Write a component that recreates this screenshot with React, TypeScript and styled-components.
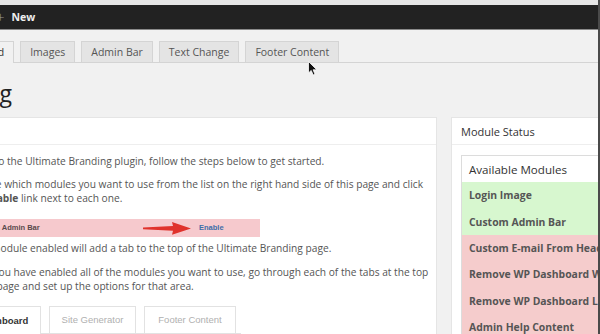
import React from 'react';
import styled, { createGlobalStyle } from 'styled-components';

const GlobalStyle = createGlobalStyle`
  html, body {
    margin: 0;
    padding: 0;
    background: #f1f1f1;
    overflow: hidden;
  }
  body {
    font-family: 'Open Sans', 'Liberation Sans', sans-serif;
    color: #444;
  }
`;

const Screen = styled.div`
  position: relative;
  width: 600px;
  height: 334px;
  overflow: hidden;
  box-sizing: border-box;
  border-right: 2px solid #4a4a4a;
  background: #f1f1f1;
`;

const TopStrip = styled.div`
  height: 5px;
  background: #e6e6e6;
`;

const AdminBar = styled.div`
  height: 24px;
  background: #222;
  border-bottom: 1px solid #8a8a8a;
  display: flex;
  align-items: center;
  gap: 7px;
  color: #fff;
`;

const Plus = styled.span`
  margin-left: -4px;
  font-size: 15px;
  font-weight: 300;
  color: #999;
  line-height: 1;
`;

const NewLabel = styled.span`
  font-size: 10.5px;
  font-weight: 700;
  color: #eee;
`;

const NavTabs = styled.div`
  display: flex;
  gap: 6px;
  margin-top: 11px;
  margin-left: -60px;
  border-bottom: 1px solid #d4d4d4;
  height: 21px;
`;

const NavTab = styled.div<{ $active?: boolean }>`
  box-sizing: border-box;
  height: ${(p) => (p.$active ? '22px' : '21px')};
  padding: 0 9px;
  line-height: 20px;
  font-size: 10.5px;
  color: ${(p) => (p.$active ? '#333' : '#555')};
  background: ${(p) => (p.$active ? '#f1f1f1' : '#e4e4e4')};
  border: 1px solid #d4d4d4;
  border-bottom: none;
  white-space: nowrap;
`;

const Title = styled.h2`
  margin: 15px 0 0 -300px;
  width: 312px;
  text-align: right;
  white-space: nowrap;
  font-family: 'Open Sans', 'Liberation Sans', sans-serif;
  font-weight: 400;
  font-size: 23px;
  line-height: 30px;
  color: #222;
`;

const Columns = styled.div`
  display: flex;
  gap: 14px;
  margin-top: 9px;
  margin-left: -84px;
  align-items: flex-start;
`;

const Panel = styled.div<{ $width: number }>`
  flex: 0 0 ${(p) => p.$width}px;
  width: ${(p) => p.$width}px;
  min-width: 0;
  overflow: hidden;
  box-sizing: border-box;
  background: #fff;
  border: 1px solid #e5e5e5;
  height: 240px;
`;

const PanelHead = styled.div`
  height: 26px;
  border-bottom: 1px solid #eee;
  padding-left: 9px;
  display: flex;
  align-items: center;
  font-size: 11px;
  color: #333;
`;

const PanelBody = styled.div`
  padding: 9px 0 0 31px;
  font-size: 10.2px;
  line-height: 14px;
  color: #555;
`;

const Para = styled.p<{ $gap?: number }>`
  margin: 0 0 ${(p) => p.$gap ?? 10}px;
  white-space: nowrap;
`;

const Steps = styled.div`
  padding-left: 18px;
`;

const ShotBar = styled.div`
  display: grid;
  grid-template-columns: 171px 48px auto;
  align-items: center;
  width: 294px;
  height: 18px;
  margin: 14px 0 4px;
  padding-left: 6px;
  box-sizing: border-box;
  background: #f6c9cd;
  font-family: 'Liberation Sans', Arial, sans-serif;
  font-size: 7.5px;
  font-weight: 700;
`;

const ShotLabel = styled.span`
  color: #5a4a4c;
  white-space: nowrap;
`;

const ShotArrow = styled.svg`
  display: block;
`;

const ShotLink = styled.span`
  color: #3d6ea8;
  padding-left: 8px;
`;

const ShotTabs = styled.div`
  display: flex;
  align-items: flex-end;
  gap: 8px;
  width: 275px;
  height: 27px;
  margin-top: 13px;
  border-bottom: 1px solid #e2e2e2;
  font-family: 'Liberation Sans', Arial, sans-serif;
  font-size: 9.5px;
`;

const ShotTab = styled.div<{ $active?: boolean; $w: number }>`
  box-sizing: border-box;
  width: ${(p) => p.$w}px;
  height: ${(p) => (p.$active ? '28px' : '27px')};
  margin-bottom: ${(p) => (p.$active ? '-1px' : '0')};
  border: 1px solid #e2e2e2;
  border-bottom: none;
  background: #fff;
  display: flex;
  align-items: center;
  justify-content: center;
  color: ${(p) => (p.$active ? '#333' : '#b0b0b0')};
  font-weight: ${(p) => (p.$active ? 700 : 400)};
`;

const SideBody = styled.div`
  padding: 10px 9px;
`;

const ModuleList = styled.div`
  border: 1px solid #dcdcdc;
  background: #fff;
`;

const ModuleHead = styled.div`
  height: 26px;
  display: flex;
  align-items: center;
  padding-left: 7px;
  font-size: 11.6px;
  color: #333;
`;

const ModuleRow = styled.div<{ $on: boolean }>`
  height: 26.4px;
  display: flex;
  align-items: center;
  padding-left: 7px;
  font-size: 10.4px;
  font-weight: 700;
  color: #555;
  white-space: nowrap;
  background: ${(p) => (p.$on ? '#d7f7cf' : '#f5cccc')};
`;

const Cursor = styled.svg`
  position: absolute;
  left: 308px;
  top: 61px;
`;

const modules = [
  { name: 'Login Image', on: true },
  { name: 'Custom Admin Bar', on: true },
  { name: 'Custom E-mail From Headers', on: false },
  { name: 'Remove WP Dashboard Widgets', on: false },
  { name: 'Remove WP Dashboard Link', on: false },
  { name: 'Admin Help Content', on: false },
];

export default function App() {
  return (
    <Screen>
      <GlobalStyle />
      <TopStrip />
      <AdminBar>
        <Plus>+</Plus>
        <NewLabel>New</NewLabel>
      </AdminBar>

      <NavTabs>
        <NavTab $active>Dashboard</NavTab>
        <NavTab>Images</NavTab>
        <NavTab>Admin Bar</NavTab>
        <NavTab>Text Change</NavTab>
        <NavTab>Footer Content</NavTab>
      </NavTabs>

      <Title>Ultimate Branding</Title>

      <Columns>
        <Panel $width={521}>
          <PanelHead />
          <PanelBody>
            <Para $gap={9}>Welcome to the Ultimate Branding plugin, follow the steps below to get started.</Para>
            <Steps>
              <Para $gap={0}>
                Choose which modules you want to use from the list on the right hand side of this page and click
                <br />
                the <b>Enable</b> link next to each one.
              </Para>
              <ShotBar>
                <ShotLabel>Custom Admin Bar</ShotLabel>
                <ShotArrow width="48" height="13" viewBox="0 0 48 13">
                  <path d="M0 5.6 L0 7.2 L30 8.8 L29 12.8 L48 6.4 L29 0 L30 4 Z" fill="#e0322c" />
                </ShotArrow>
                <ShotLink>Enable</ShotLink>
              </ShotBar>
              <Para>Each module enabled will add a tab to the top of the Ultimate Branding page.</Para>
              <Para $gap={0}>
                Once you have enabled all of the modules you want to use, go through each of the tabs at the top
                <br />
                of the page and set up the options for that area.
              </Para>
              <ShotTabs>
                <ShotTab $active $w={75}>Dashboard</ShotTab>
                <ShotTab $w={87}>Site Generator</ShotTab>
                <ShotTab $w={92}>Footer Content</ShotTab>
              </ShotTabs>
            </Steps>
          </PanelBody>
        </Panel>

        <Panel $width={260}>
          <PanelHead>Module Status</PanelHead>
          <SideBody>
            <ModuleList>
              <ModuleHead>Available Modules</ModuleHead>
              {modules.map((m) => (
                <ModuleRow key={m.name} $on={m.on}>
                  {m.name}
                </ModuleRow>
              ))}
            </ModuleList>
          </SideBody>
        </Panel>
      </Columns>

      <Cursor width="10" height="15" viewBox="0 0 10 15">
        <path d="M0.5 0.5 L0.5 12 L3.2 9.4 L5.2 14 L7 13.2 L5.1 8.8 L8.8 8.8 Z" fill="#111" stroke="#fff" strokeWidth="0.8" />
      </Cursor>
    </Screen>
  );
}
